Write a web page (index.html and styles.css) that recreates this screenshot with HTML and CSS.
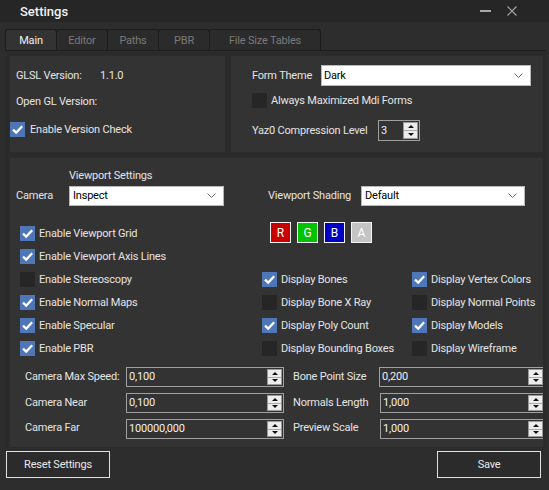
FILE: index.html
```html
<!DOCTYPE html>
<html>
<head>
<meta charset="utf-8">
<link rel="stylesheet" href="styles.css">
</head>
<body>
<div class="window">
  <div class="titlebar">
    <span class="title">Settings</span>
    <div class="controls">
      <span class="min"></span>
      <svg class="close" width="10" height="10" viewBox="0 0 10 10"><path d="M0.5 0.5 L9.5 9.5 M9.5 0.5 L0.5 9.5" stroke="#a8a8a8" stroke-width="1.1" fill="none"/></svg>
    </div>
  </div>
  <div class="client">
    <div class="tabs">
      <div class="tab active w52">Main</div>
      <div class="tab w51">Editor</div>
      <div class="tab w52">Paths</div>
      <div class="tab w51">PBR</div>
      <div class="tab w111">File Size Tables</div>
    </div>
    <div class="page">
      <div class="top-row">
        <div class="panel info">
          <div class="irow r1"><span class="lab glsl">GLSL Version:</span><span>1.1.0</span></div>
          <div class="irow r2"><span class="lab">Open GL Version:</span></div>
          <div class="irow r3"><span class="cb on"><svg viewBox="0 0 15 15"><path d="M3 7.6 L6.2 10.6 L12.2 4.2" stroke="#fff" stroke-width="2.2" fill="none"/></svg></span><span class="cbl">Enable Version Check</span></div>
        </div>
        <div class="panel theme">
          <div class="trow t1"><span class="tlab">Form Theme</span>
            <div class="select sel-theme"><span>Dark</span><svg class="chev" width="9" height="5" viewBox="0 0 9 5"><path d="M0.5 0.5 L4.5 4.5 L8.5 0.5" stroke="#6a6a6a" fill="none"/></svg></div>
          </div>
          <div class="trow t2"><span class="cb"></span><span class="cbl">Always Maximized Mdi Forms</span></div>
          <div class="trow t3"><span class="ylab">Yaz0 Compression Level</span>
            <div class="num small"><span class="val">3</span><span class="spin"><span><i class="up"></i></span><span><i class="down"></i></span></span></div>
          </div>
        </div>
      </div>
      <div class="panel viewport">
        <div class="vp-head">Viewport Settings</div>
        <div class="cam-row">
          <span class="cam-lab">Camera</span>
          <div class="select sel-cam"><span>Inspect</span><svg class="chev" width="9" height="5" viewBox="0 0 9 5"><path d="M0.5 0.5 L4.5 4.5 L8.5 0.5" stroke="#6a6a6a" fill="none"/></svg></div>
          <span class="shade-lab">Viewport Shading</span>
          <div class="select sel-shade"><span>Default</span><svg class="chev" width="9" height="5" viewBox="0 0 9 5"><path d="M0.5 0.5 L4.5 4.5 L8.5 0.5" stroke="#6a6a6a" fill="none"/></svg></div>
        </div>
        <div class="checks">
          <div class="ck"><span class="cb on"><svg viewBox="0 0 15 15"><path d="M3 7.6 L6.2 10.6 L12.2 4.2" stroke="#fff" stroke-width="2.2" fill="none"/></svg></span><span class="cbl">Enable Viewport Grid</span></div>
          <div class="rgba"><span class="ch r">R</span><span class="ch g">G</span><span class="ch b">B</span><span class="ch a">A</span></div>
          <div class="ck full"><span class="cb on"><svg viewBox="0 0 15 15"><path d="M3 7.6 L6.2 10.6 L12.2 4.2" stroke="#fff" stroke-width="2.2" fill="none"/></svg></span><span class="cbl">Enable Viewport Axis Lines</span></div>

          <div class="ck"><span class="cb"></span><span class="cbl">Enable Stereoscopy</span></div>
          <div class="ck"><span class="cb on"><svg viewBox="0 0 15 15"><path d="M3 7.6 L6.2 10.6 L12.2 4.2" stroke="#fff" stroke-width="2.2" fill="none"/></svg></span><span class="cbl">Display Bones</span></div>
          <div class="ck"><span class="cb on"><svg viewBox="0 0 15 15"><path d="M3 7.6 L6.2 10.6 L12.2 4.2" stroke="#fff" stroke-width="2.2" fill="none"/></svg></span><span class="cbl">Display Vertex Colors</span></div>

          <div class="ck"><span class="cb on"><svg viewBox="0 0 15 15"><path d="M3 7.6 L6.2 10.6 L12.2 4.2" stroke="#fff" stroke-width="2.2" fill="none"/></svg></span><span class="cbl">Enable Normal Maps</span></div>
          <div class="ck"><span class="cb"></span><span class="cbl">Display Bone X Ray</span></div>
          <div class="ck"><span class="cb"></span><span class="cbl">Display Normal Points</span></div>

          <div class="ck"><span class="cb on"><svg viewBox="0 0 15 15"><path d="M3 7.6 L6.2 10.6 L12.2 4.2" stroke="#fff" stroke-width="2.2" fill="none"/></svg></span><span class="cbl">Enable Specular</span></div>
          <div class="ck"><span class="cb on"><svg viewBox="0 0 15 15"><path d="M3 7.6 L6.2 10.6 L12.2 4.2" stroke="#fff" stroke-width="2.2" fill="none"/></svg></span><span class="cbl">Display Poly Count</span></div>
          <div class="ck"><span class="cb on"><svg viewBox="0 0 15 15"><path d="M3 7.6 L6.2 10.6 L12.2 4.2" stroke="#fff" stroke-width="2.2" fill="none"/></svg></span><span class="cbl">Display Models</span></div>

          <div class="ck"><span class="cb on"><svg viewBox="0 0 15 15"><path d="M3 7.6 L6.2 10.6 L12.2 4.2" stroke="#fff" stroke-width="2.2" fill="none"/></svg></span><span class="cbl">Enable PBR</span></div>
          <div class="ck"><span class="cb"></span><span class="cbl">Display Bounding Boxes</span></div>
          <div class="ck"><span class="cb"></span><span class="cbl">Display Wireframe</span></div>
        </div>
        <div class="nums">
          <span class="nlab">Camera Max Speed:</span>
          <div class="num wide"><span class="val">0,100</span><span class="spin"><span><i class="up"></i></span><span><i class="down"></i></span></span></div>
          <span class="nlab2">Bone Point Size</span>
          <div class="num right"><span class="val">0,200</span><span class="spin"><span><i class="up"></i></span><span><i class="down"></i></span></span></div>

          <span class="nlab">Camera Near</span>
          <div class="num wide"><span class="val">0,100</span><span class="spin"><span><i class="up"></i></span><span><i class="down"></i></span></span></div>
          <span class="nlab2">Normals Length</span>
          <div class="num right sh"><span class="val">1,000</span><span class="spin"><span><i class="up"></i></span><span><i class="down"></i></span></span></div>

          <span class="nlab up1">Camera Far</span>
          <div class="num wide"><span class="val">100000,000</span><span class="spin"><span><i class="up"></i></span><span><i class="down"></i></span></span></div>
          <span class="nlab2 up1">Preview Scale</span>
          <div class="num right sh"><span class="val">1,000</span><span class="spin"><span><i class="up"></i></span><span><i class="down"></i></span></span></div>
        </div>
      </div>
    </div>
    <div class="footer">
      <button class="btn">Reset Settings</button>
      <button class="btn">Save</button>
    </div>
  </div>
</div>
</body>
</html>
```
FILE: styles.css
```css
* { box-sizing: border-box; }
html, body { margin: 0; padding: 0; }
body {
  width: 549px;
  height: 490px;
  overflow: hidden;
  background: #2b2b2b;
  font-family: Roboto, "Liberation Sans", sans-serif;
  font-size: 11px;
  letter-spacing: -0.2px;
  color: #e4e4e4;
}
.window { display: flex; flex-direction: column; height: 490px; }

.titlebar {
  height: 22px;
  background: #262626;
  display: flex;
  align-items: center;
  padding: 0 32px 0 20px;
}
.title { font-weight: 500; font-size: 13px; color: #f2f2f2; letter-spacing: 0; }
.controls { margin-left: auto; display: flex; align-items: center; gap: 16px; }
.min { width: 11px; height: 2px; background: #a8a8a8; }
.close { display: block; }

.client {
  flex: 1;
  display: flex;
  flex-direction: column;
  padding: 7px 3px 0 5px;
  border-left: 3px solid #262626;
  margin-left: -3px;
  background: #2d2d2d;
}

.tabs { display: flex; height: 21px; }
.tab {
  height: 21px;
  display: flex;
  align-items: center;
  justify-content: center;
  background: #2b2b2b;
  border: 1px solid #1c1c1c;
  border-bottom: none;
  border-radius: 3px 3px 0 0;
  color: #7a7a7a;
  margin-right: -1px;
}
.tab.active { background: #333333; color: #f0f0f0; }
.w52 { width: 52px; }
.w51 { width: 52px; }
.w111 { width: 112px; }

.page {
  height: 398px;
  border-top: 1px solid #1e1e1e;
  padding: 5px 3px 0 5px;
  display: flex;
  flex-direction: column;
  gap: 6px;
  background: #2b2b2b;
}
.top-row { display: grid; grid-template-columns: 215px 312px; gap: 6px; height: 96px; }
.panel { background: #333333; overflow: hidden; }

/* info panel */
.info { display: flex; flex-direction: column; }
.irow { display: flex; align-items: center; }
.irow.r1 { margin-top: 8px; height: 22px; padding-left: 6px; }
.irow.r2 { margin-top: 4px; height: 22px; padding-left: 6px; }
.irow.r3 { margin-top: 10px; height: 15px; }
.lab.glsl { width: 84px; }

.cb {
  width: 15px;
  height: 15px;
  background: #262626;
  flex: none;
  display: block;
}
.cb.on { background: #4f76b6; }
.cb svg { display: block; width: 15px; height: 15px; }
.cbl { margin-left: 4px; white-space: nowrap; }
.r3 .cbl { margin-left: 5px; }

/* theme panel */
.theme { display: flex; flex-direction: column; padding-left: 21px; }
.trow { display: flex; align-items: center; }
.trow.t1 { margin-top: 9px; height: 21px; }
.trow.t2 { margin-top: 7px; height: 15px; }
.trow.t3 { margin-top: 12px; height: 21px; }
.tlab { width: 69px; }
.ylab { width: 126px; }

.select {
  background: #ffffff;
  border: 1px solid #b8b8b8;
  height: 21px;
  color: #000;
  display: flex;
  align-items: center;
  padding-left: 3px;
  padding-right: 7px;
}
.select span { flex: 1; }
.chev { display: block; }
.sel-theme { width: 210px; padding-left: 2px; }
.sel-cam { width: 155px; height: 20px; }
.sel-shade { width: 164px; height: 20px; }

/* numeric */
.num {
  display: flex;
  border: 1px solid #a0a0a0;
  background: #333333;
  height: 20px;
  color: #f0f0f0;
}
.num .val { flex: 1; padding-left: 2px; line-height: 18px; white-space: nowrap; }
.num.small { width: 42px; height: 21px; }
.num.small .val { line-height: 19px; }
.spin {
  width: 15px;
  display: flex;
  flex-direction: column;
  margin: 1px;
  background: #ececec;
  border: 1px solid #9a9a9a;
}
.spin > span { flex: 1; display: flex; align-items: center; justify-content: center; }
.spin > span + span { border-top: 1px solid #a8a8a8; }
.spin i { display: block; width: 0; height: 0; border-left: 3px solid transparent; border-right: 3px solid transparent; }
.spin i.up { border-bottom: 3px solid #111; }
.spin i.down { border-top: 3px solid #111; }

/* viewport panel */
.viewport { height: 289px; display: flex; flex-direction: column; }
.vp-head { margin-top: 11px; height: 14px; line-height: 14px; padding-left: 59px; }
.cam-row { display: flex; align-items: center; height: 21px; margin-top: 2px; }
.cam-lab { width: 59px; padding-left: 6px; }
.shade-lab { margin-left: 44px; width: 93px; }

.checks {
  margin-top: 16px;
  display: grid;
  grid-template-columns: 242px 150px 1fr;
  grid-auto-rows: 23px;
  padding-left: 10px;
}
.ck { display: flex; align-items: center; }
.ck.full { grid-column: 1 / -1; }
.rgba { grid-column: 2 / 4; display: flex; align-items: center; gap: 6px; padding-left: 8px; padding-bottom: 2px; }
.ch {
  width: 21px;
  height: 21px;
  border: 1px solid #f4f4f4;
  color: #fff;
  display: flex;
  align-items: center;
  justify-content: center;
  font-size: 12px;
  letter-spacing: 0;
}
.ch.r { background: #c80000; }
.ch.g { background: #00c400; }
.ch.b { background: #0000c4; }
.ch.a { background: #c4c4c4; }

.nums {
  margin-top: 7px;
  display: grid;
  grid-template-columns: 116px 158px 95px 166px;
  grid-auto-rows: 20px;
  row-gap: 6px;
}
.nlab { padding-left: 15px; align-self: center; white-space: nowrap; margin-top: -1px; }
.nlab2 { padding-left: 9px; align-self: center; white-space: nowrap; margin-top: -1px; }
.up1 { margin-top: -4px; }
.num.sh { margin-left: 1px; }

.footer {
  display: flex;
  justify-content: space-between;
  padding: 3px 5px 0 1px;
}
.btn {
  width: 104px;
  height: 27px;
  border: 1px solid #e0e0e0;
  background: #2b2b2b;
  color: #e8e8e8;
  font-family: Roboto, "Liberation Sans", sans-serif;
  font-size: 11px;
  letter-spacing: -0.2px;
  padding: 0;
}
```
